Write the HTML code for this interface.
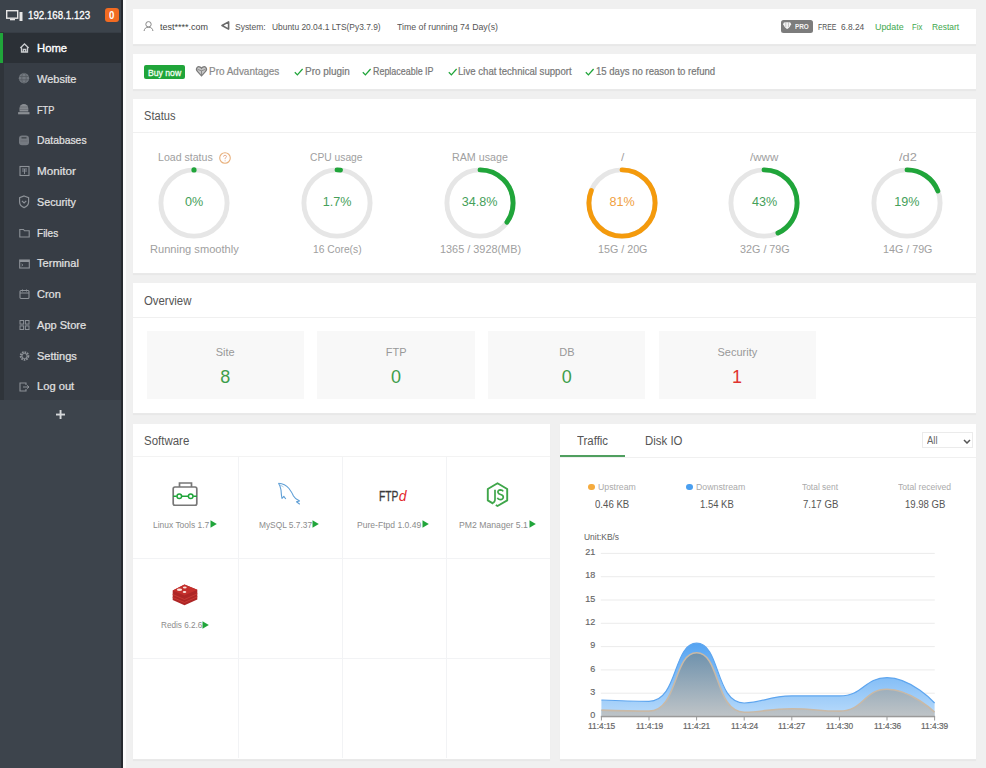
<!DOCTYPE html><html><head><meta charset="utf-8"><style>html,body{margin:0;padding:0}body{width:986px;height:768px;overflow:hidden;position:relative;background:#f0f0f0;font-family:"Liberation Sans",sans-serif}.t{position:absolute;white-space:nowrap;line-height:1;transform-origin:0 0}</style></head><body>
<div style="position:absolute;left:0;top:0;width:121px;height:32px;background:#3c434b"></div>
<div style="position:absolute;left:0;top:32px;width:121px;height:368px;background:#373d45"></div>
<div style="position:absolute;left:0;top:32px;width:4px;height:368px;background:#2f343a"></div>
<div style="position:absolute;left:0;top:400px;width:121px;height:368px;background:#3d444c"></div>
<div style="position:absolute;left:121px;top:0;width:1.5px;height:768px;background:#25292e"></div>
<div style="position:absolute;left:122.5px;top:0;width:3px;height:768px;background:#fbfbfb"></div>
<div style="position:absolute;left:0;top:32.5px;width:121px;height:30px;background:#2b3036"></div>
<div style="position:absolute;left:0;top:32.5px;width:2.5px;height:30px;background:#20a53a"></div>
<div style="position:absolute;left:104.5px;top:7.5px;width:14.5px;height:14.5px;border-radius:3px;background:#f26b22"></div>
<svg style="position:absolute;left:6px;top:10px" width="17" height="11" viewBox="0 0 17 11">
<rect x="0.7" y="0.7" width="11" height="7.5" fill="none" stroke="#e6e6e6" stroke-width="1.4"/>
<rect x="4" y="9" width="5" height="1.3" fill="#e6e6e6"/>
<rect x="13.5" y="2" width="3" height="9" fill="#e6e6e6"/></svg>
<svg style="position:absolute;left:19px;top:43.30px;overflow:visible" width="11" height="10" viewBox="0 0 11 10"><path d="M1.3,5 L5.5,1 L9.7,5 M2.5,4 V9 H8.5 V4 M4.3,9 V6.5 H6.7 V9" fill="none" stroke="#c9cbce" stroke-width="1.3"/></svg>
<svg style="position:absolute;left:19px;top:74.05px;overflow:visible" width="11" height="10" viewBox="0 0 11 10"><circle cx="5" cy="4.15" r="5.2" fill="#737980"/><path d="M0.2,2.5 H9.8 M0.2,5.8 H9.8" stroke="#555a61" stroke-width="0.8"/><ellipse cx="5" cy="4.15" rx="2.2" ry="5" fill="none" stroke="#555a61" stroke-width="0.8"/></svg>
<svg style="position:absolute;left:19px;top:104.80px;overflow:visible" width="11" height="10" viewBox="0 0 11 10"><path d="M0.5,6.5 V3.4 A4.4,4.4 0 0 1 9.3,3.4 V6.5 Z" fill="#8a8e93"/><path d="M1,2 H8.8 M0.8,4.3 H9" stroke="#5d6268" stroke-width="0.7"/><rect x="-0.9" y="7.1" width="11.4" height="2.2" fill="#8a8e93"/></svg>
<svg style="position:absolute;left:19px;top:135.55px;overflow:visible" width="11" height="10" viewBox="0 0 11 10"><rect x="0" y="-0.6" width="10" height="9.9" rx="3" fill="#757a81"/><rect x="2.5" y="1" width="5" height="1.6" fill="#474c52"/><path d="M1.5,5 H8.5" stroke="#62676d" stroke-width="0.6"/></svg>
<svg style="position:absolute;left:19px;top:166.30px;overflow:visible" width="11" height="10" viewBox="0 0 11 10"><rect x="1" y="0.5" width="9" height="9" fill="none" stroke="#8d9298" stroke-width="1.1"/><path d="M3,3 H8 M3,5 H8 M5.5,3 V8" stroke="#8d9298" stroke-width="0.9"/></svg>
<svg style="position:absolute;left:19px;top:197.05px;overflow:visible" width="11" height="10" viewBox="0 0 11 10"><path d="M5.1,-1 L9.6,0.6 V5 Q9.6,8.8 5.1,10.6 Q0.6,8.8 0.6,5 V0.6 Z" fill="none" stroke="#8d9298" stroke-width="1.2"/><path d="M2.9,3.8 L5.1,6 L7.3,3.8" fill="none" stroke="#8d9298" stroke-width="1.2"/></svg>
<svg style="position:absolute;left:19px;top:227.80px;overflow:visible" width="11" height="10" viewBox="0 0 11 10"><path d="M0.8,1.5 H4.5 L5.5,2.8 H10.2 V9 H0.8 Z" fill="none" stroke="#8d9298" stroke-width="1.1"/></svg>
<svg style="position:absolute;left:19px;top:258.55px;overflow:visible" width="11" height="10" viewBox="0 0 11 10"><rect x="0.7" y="1" width="9.6" height="8" fill="none" stroke="#8d9298" stroke-width="1.1"/><rect x="0.7" y="1" width="9.6" height="2" fill="#8d9298"/><path d="M2.5,5 L4,6 L2.5,7" fill="none" stroke="#8d9298" stroke-width="0.8"/></svg>
<svg style="position:absolute;left:19px;top:289.30px;overflow:visible" width="11" height="10" viewBox="0 0 11 10"><rect x="1" y="1.5" width="9" height="8" rx="1" fill="none" stroke="#8d9298" stroke-width="1.1"/><path d="M1,4 H10 M3.5,0.5 V2.5 M7.5,0.5 V2.5" stroke="#8d9298" stroke-width="1"/></svg>
<svg style="position:absolute;left:19px;top:320.05px;overflow:visible" width="11" height="10" viewBox="0 0 11 10"><rect x="1" y="0.5" width="3.6" height="3.6" fill="none" stroke="#8d9298" stroke-width="1"/><rect x="6.4" y="0.5" width="3.6" height="3.6" fill="none" stroke="#8d9298" stroke-width="1"/><rect x="1" y="5.9" width="3.6" height="3.6" fill="none" stroke="#8d9298" stroke-width="1"/><rect x="6.4" y="5.9" width="3.6" height="3.6" fill="none" stroke="#8d9298" stroke-width="1"/></svg>
<svg style="position:absolute;left:19px;top:350.80px;overflow:visible" width="11" height="10" viewBox="0 0 11 10"><circle cx="5.5" cy="5" r="3.8" fill="none" stroke="#8d9298" stroke-width="2" stroke-dasharray="1.6 0.9"/><circle cx="5.5" cy="5" r="2.6" fill="none" stroke="#8d9298" stroke-width="1"/></svg>
<svg style="position:absolute;left:19px;top:381.55px;overflow:visible" width="11" height="10" viewBox="0 0 11 10"><path d="M7,3 V1 H1 V9 H7 V7" fill="none" stroke="#8d9298" stroke-width="1.1"/><path d="M4,5 H10 M8,3.3 L10,5 L8,6.7" fill="none" stroke="#8d9298" stroke-width="1"/></svg>
<svg style="position:absolute;left:55.5px;top:410.2px" width="9" height="9" viewBox="0 0 9 9"><rect x="3.6" y="0" width="1.9" height="9" fill="#d5d8da"/><rect x="0" y="3.6" width="9" height="1.9" fill="#d5d8da"/></svg>
<div style="position:absolute;left:133px;top:9px;width:843px;height:35px;background:#fff;box-shadow:0 1px 0 #e9e9e9,0 2px 1px rgba(0,0,0,0.03)"></div>
<div style="position:absolute;left:133px;top:54px;width:843px;height:35px;background:#fff;box-shadow:0 1px 0 #e9e9e9,0 2px 1px rgba(0,0,0,0.03)"></div>
<div style="position:absolute;left:133px;top:98.5px;width:843px;height:174.5px;background:#fff;box-shadow:0 1px 0 #e9e9e9,0 2px 1px rgba(0,0,0,0.03)"></div>
<div style="position:absolute;left:133px;top:283px;width:843px;height:129.5px;background:#fff;box-shadow:0 1px 0 #e9e9e9,0 2px 1px rgba(0,0,0,0.03)"></div>
<div style="position:absolute;left:133px;top:423.5px;width:416.5px;height:335px;background:#fff;box-shadow:0 1px 0 #e9e9e9,0 2px 1px rgba(0,0,0,0.03)"></div>
<div style="position:absolute;left:560px;top:423.5px;width:416px;height:335px;background:#fff;box-shadow:0 1px 0 #e9e9e9,0 2px 1px rgba(0,0,0,0.03)"></div>
<svg style="position:absolute;left:143px;top:20.5px" width="11" height="10.5" viewBox="0 0 11 10.5">
<circle cx="5.5" cy="3.3" r="2.7" fill="none" stroke="#888" stroke-width="1"/>
<path d="M1,10.3 Q1.5,6.2 5.5,6.2 Q9.5,6.2 10,10.3" fill="none" stroke="#888" stroke-width="1"/></svg>
<svg style="position:absolute;left:221px;top:20.5px" width="9" height="9" viewBox="0 0 9 9">
<path d="M1,4.5 L7.6,0.9 L7.6,8.1 Z" fill="none" stroke="#6a6a6a" stroke-width="1.6" stroke-linejoin="round"/></svg>
<div style="position:absolute;left:780.5px;top:20px;width:32.5px;height:12.5px;border-radius:2.5px;background:#7c7c7c"></div>
<svg style="position:absolute;left:783.3px;top:22.1px" width="8.3" height="7.3" viewBox="0 0 8.3 7.3">
<path d="M0.2,2.2 Q0.2,0.4 2,0.2 H6.3 Q8.1,0.4 8.1,2.2 Q7.5,4.6 4.15,7.2 Q0.8,4.6 0.2,2.2 Z" fill="#f2f2f2"/><path d="M2.8,0.3 V5 M5.5,0.3 V5" stroke="#9a9a9a" stroke-width="0.5"/></svg>
<div style="position:absolute;left:143.7px;top:65px;width:41.3px;height:14.3px;border-radius:2px;background:#20a53a"></div>
<svg style="position:absolute;left:195.6px;top:66.2px;overflow:visible" width="11" height="10.4" viewBox="0 0 11 10.4">
<path d="M5.5,2.3 C4.6,0.7 2.4,0.2 1.2,1.4 C0,2.7 0.5,4.5 1.6,5.7 L5.5,9.8 L9.4,5.7 C10.5,4.5 11,2.7 9.8,1.4 C8.6,0.2 6.4,0.7 5.5,2.3 Z" fill="#c8c8c8" stroke="#7a7a7a" stroke-width="1.2"/>
<path d="M1.6,3.4 L5.5,4.8 L9.4,3.4 M5.5,4.8 V9" fill="none" stroke="#7a7a7a" stroke-width="0.8"/></svg>
<svg style="position:absolute;left:293.7px;top:67.5px" width="9.5" height="8" viewBox="0 0 9.5 8"><path d="M0.8,4.3 L3.4,6.9 L8.6,1" fill="none" stroke="#20a53a" stroke-width="1.3"/></svg>
<svg style="position:absolute;left:362px;top:67.5px" width="9.5" height="8" viewBox="0 0 9.5 8"><path d="M0.8,4.3 L3.4,6.9 L8.6,1" fill="none" stroke="#20a53a" stroke-width="1.3"/></svg>
<svg style="position:absolute;left:447.6px;top:67.5px" width="9.5" height="8" viewBox="0 0 9.5 8"><path d="M0.8,4.3 L3.4,6.9 L8.6,1" fill="none" stroke="#20a53a" stroke-width="1.3"/></svg>
<svg style="position:absolute;left:585.4px;top:67.5px" width="9.5" height="8" viewBox="0 0 9.5 8"><path d="M0.8,4.3 L3.4,6.9 L8.6,1" fill="none" stroke="#20a53a" stroke-width="1.3"/></svg>
<div style="position:absolute;left:133px;top:132px;width:843px;height:1px;background:#f0f0f0"></div>
<svg style="position:absolute;left:154.0px;top:162.5px" width="80" height="80" viewBox="0 0 80 80"><circle cx="40" cy="40" r="33.1" fill="none" stroke="#e6e6e6" stroke-width="4.9"/><circle cx="40" cy="6.899999999999999" r="2.6" fill="#20a53a"/></svg>
<svg style="position:absolute;left:297.0px;top:162.5px" width="80" height="80" viewBox="0 0 80 80"><circle cx="40" cy="40" r="33.1" fill="none" stroke="#e6e6e6" stroke-width="4.9"/><circle cx="40" cy="40" r="33.1" fill="none" stroke="#20a53a" stroke-width="4.9" stroke-linecap="round" stroke-dasharray="3.54 207.97" transform="rotate(-90 40 40)"/></svg>
<svg style="position:absolute;left:439.5px;top:162.5px" width="80" height="80" viewBox="0 0 80 80"><circle cx="40" cy="40" r="33.1" fill="none" stroke="#e6e6e6" stroke-width="4.9"/><circle cx="40" cy="40" r="33.1" fill="none" stroke="#20a53a" stroke-width="4.9" stroke-linecap="round" stroke-dasharray="72.37 207.97" transform="rotate(-90 40 40)"/></svg>
<svg style="position:absolute;left:582.0px;top:162.5px" width="80" height="80" viewBox="0 0 80 80"><circle cx="40" cy="40" r="33.1" fill="none" stroke="#e6e6e6" stroke-width="4.9"/><circle cx="40" cy="40" r="33.1" fill="none" stroke="#f49a0c" stroke-width="4.9" stroke-linecap="round" stroke-dasharray="168.46 207.97" transform="rotate(-90 40 40)"/></svg>
<svg style="position:absolute;left:724.4px;top:162.5px" width="80" height="80" viewBox="0 0 80 80"><circle cx="40" cy="40" r="33.1" fill="none" stroke="#e6e6e6" stroke-width="4.9"/><circle cx="40" cy="40" r="33.1" fill="none" stroke="#20a53a" stroke-width="4.9" stroke-linecap="round" stroke-dasharray="89.43 207.97" transform="rotate(-90 40 40)"/></svg>
<svg style="position:absolute;left:866.8px;top:162.5px" width="80" height="80" viewBox="0 0 80 80"><circle cx="40" cy="40" r="33.1" fill="none" stroke="#e6e6e6" stroke-width="4.9"/><circle cx="40" cy="40" r="33.1" fill="none" stroke="#20a53a" stroke-width="4.9" stroke-linecap="round" stroke-dasharray="39.51 207.97" transform="rotate(-90 40 40)"/></svg>
<svg style="position:absolute;left:218.9px;top:151.7px" width="12" height="12" viewBox="0 0 12 12">
<circle cx="6" cy="6" r="5.3" fill="none" stroke="#e8b07c" stroke-width="1.1"/>
<path d="M4.5,4.7 Q4.5,3.3 6,3.3 Q7.5,3.3 7.5,4.6 Q7.5,5.5 6.1,6.2 V7.2" fill="none" stroke="#e3a88a" stroke-width="0.9"/><circle cx="6.1" cy="8.7" r="0.55" fill="#e3a88a"/></svg>
<div style="position:absolute;left:133px;top:316.5px;width:843px;height:1px;background:#f0f0f0"></div>
<div style="position:absolute;left:146.5px;top:331.2px;width:157.4px;height:68.3px;background:#f8f8f8"></div>
<div style="position:absolute;left:317.3px;top:331.2px;width:157.4px;height:68.3px;background:#f8f8f8"></div>
<div style="position:absolute;left:488.1px;top:331.2px;width:157.4px;height:68.3px;background:#f8f8f8"></div>
<div style="position:absolute;left:658.9000000000001px;top:331.2px;width:157.4px;height:68.3px;background:#f8f8f8"></div>
<div style="position:absolute;left:133px;top:456.2px;width:416.5px;height:1px;background:#f3f3f3"></div>
<div style="position:absolute;left:237.5px;top:457px;width:1px;height:301px;background:#f2f3f5"></div>
<div style="position:absolute;left:341.6px;top:457px;width:1px;height:301px;background:#f2f3f5"></div>
<div style="position:absolute;left:445.8px;top:457px;width:1px;height:301px;background:#f2f3f5"></div>
<div style="position:absolute;left:133px;top:557.6px;width:416.5px;height:1px;background:#f2f3f5"></div>
<div style="position:absolute;left:133px;top:657.8px;width:416.5px;height:1px;background:#f2f3f5"></div>
<svg style="position:absolute;left:209.5px;top:520.2px" width="7" height="8" viewBox="0 0 7 8"><path d="M0.5,0.3 L6.8,4 L0.5,7.7 Z" fill="#20a53a"/></svg>
<svg style="position:absolute;left:312.1px;top:520.2px" width="7" height="8" viewBox="0 0 7 8"><path d="M0.5,0.3 L6.8,4 L0.5,7.7 Z" fill="#20a53a"/></svg>
<svg style="position:absolute;left:421.8px;top:520.2px" width="7" height="8" viewBox="0 0 7 8"><path d="M0.5,0.3 L6.8,4 L0.5,7.7 Z" fill="#20a53a"/></svg>
<svg style="position:absolute;left:528.5px;top:520.2px" width="7" height="8" viewBox="0 0 7 8"><path d="M0.5,0.3 L6.8,4 L0.5,7.7 Z" fill="#20a53a"/></svg>
<svg style="position:absolute;left:202.1px;top:620.5px" width="7" height="8" viewBox="0 0 7 8"><path d="M0.5,0.3 L6.8,4 L0.5,7.7 Z" fill="#20a53a"/></svg>
<svg style="position:absolute;left:172px;top:482px" width="26" height="24" viewBox="0 0 26 24">
<path d="M7.5,5 V1 H19.5 V5" fill="none" stroke="#777" stroke-width="1.7"/>
<rect x="1.2" y="5" width="23.6" height="18.4" rx="1.8" fill="none" stroke="#777" stroke-width="1.7"/>
<path d="M1,14.3 H4.8 M9.7,14.3 H16.3 M21.2,14.3 H25" stroke="#20a53a" stroke-width="1.5"/>
<circle cx="7.3" cy="14.3" r="2.3" fill="none" stroke="#20a53a" stroke-width="1.5"/>
<circle cx="18.7" cy="14.3" r="2.3" fill="none" stroke="#20a53a" stroke-width="1.5"/></svg>
<svg style="position:absolute;left:274px;top:479px" width="30" height="30" viewBox="0 0 30 30">
<path d="M4.5,4.2 Q11,4.5 15,9.5 Q18,13.5 19.5,17 Q21,19.5 24,21 L25.5,22 L22.5,22.8 L25.8,25.2" fill="none" stroke="#5f9fd6" stroke-width="1.1" stroke-linejoin="round"/>
<path d="M4.5,4.2 Q6.5,7 7,11 Q7.3,16 8,19.5 L9.8,17.3 L11.8,20" fill="none" stroke="#5f9fd6" stroke-width="1.1" stroke-linejoin="round"/>
<path d="M6,6 Q9,7.5 9.5,8" fill="none" stroke="#8cbde6" stroke-width="0.8"/></svg>
<svg style="position:absolute;left:486px;top:481.5px" width="23" height="25" viewBox="0 0 23 25">
<path d="M7.2,21.6 L1.8,18.4 V7 L11.5,1.3 L21.2,7 V18.4 L11.5,24 L9.8,23" fill="none" stroke="#3fa64a" stroke-width="1.9" stroke-linejoin="round"/>
<path d="M9,7.8 V17.5 Q9,20.3 6.5,20.8" fill="none" stroke="#3fa64a" stroke-width="1.7"/>
<path d="M17.2,9.4 Q16.4,7.9 14.3,7.9 Q11.8,8 11.9,10.2 Q12.1,12 14.6,12.5 Q17.4,13.1 17.3,15.3 Q17.1,17.6 14.3,17.6 Q12,17.5 11.4,15.8" fill="none" stroke="#3fa64a" stroke-width="1.7"/></svg>
<svg style="position:absolute;left:172px;top:583.5px" width="26" height="22" viewBox="0 0 26 22">
<path d="M0.7,6.5 L12.5,0.5 L25.3,5.8 V15.5 L12.5,21.3 L0.7,16 Z" fill="#ae2626"/>
<path d="M0.7,6.5 L12.5,0.5 L25.3,5.8 L12.5,11.5 Z" fill="#c42f2c"/>
<path d="M0.7,10.5 L12.5,15.5 L25.3,9.8 M0.7,13.5 L12.5,18.5 L25.3,12.8" fill="none" stroke="#c83a34" stroke-width="1"/>
<ellipse cx="7.5" cy="5.8" rx="2.6" ry="1.2" fill="#fbe3dc"/><ellipse cx="12.8" cy="3.6" rx="1.9" ry="1" fill="#fbe3dc"/><ellipse cx="12.5" cy="8" rx="1.8" ry="1" fill="#fbe3dc"/></svg>
<div style="position:absolute;left:560px;top:456.5px;width:416px;height:1px;background:#f0f0f0"></div>
<div style="position:absolute;left:560px;top:455px;width:65px;height:2px;background:#4f9f5f"></div>
<div style="position:absolute;left:922.2px;top:432.1px;width:51px;height:16.2px;border:1px solid #ebebeb;box-sizing:border-box"></div>
<svg style="position:absolute;left:962.5px;top:438.5px" width="8" height="5" viewBox="0 0 8 5"><path d="M1,1 L4,4 L7,1" fill="none" stroke="#555" stroke-width="1.5"/></svg>
<div style="position:absolute;left:588.4px;top:483.6px;width:6.6px;height:6.6px;border-radius:50%;background:#f5ab3e"></div>
<div style="position:absolute;left:686.4px;top:483.6px;width:6.6px;height:6.6px;border-radius:50%;background:#4a9ff0"></div>
<svg style="position:absolute;left:0;top:0" width="986" height="768" viewBox="0 0 986 768">
<defs><linearGradient id="gd" x1="0" y1="0" x2="0" y2="1"><stop offset="0" stop-color="#55a4f2"/><stop offset="1" stop-color="#b9dbfb"/></linearGradient>
<linearGradient id="gu" x1="0" y1="0" x2="0" y2="1"><stop offset="0" stop-color="#6f92ad"/><stop offset="1" stop-color="#bfc4c7"/></linearGradient></defs>
<rect x="600.8" y="552.9" width="334" height="1" fill="#ececec"/><rect x="600.8" y="576.2" width="334" height="1" fill="#ececec"/><rect x="600.8" y="599.5" width="334" height="1" fill="#ececec"/><rect x="600.8" y="622.8" width="334" height="1" fill="#ececec"/><rect x="600.8" y="646.1" width="334" height="1" fill="#ececec"/><rect x="600.8" y="669.4" width="334" height="1" fill="#ececec"/><rect x="600.8" y="692.7" width="334" height="1" fill="#ececec"/>
<path d="M601.4,700.0 C601.4,700.0 630.5,701.4 649.0,701.4 C678.1,701.4 673.0,643.2 696.6,643.2 C720.6,643.2 715.0,703.0 744.2,703.0 C762.6,703.0 767.9,695.9 791.8,695.9 C815.5,695.9 816.4,695.9 839.4,695.9 C864.0,695.9 863.9,677.7 887.0,677.7 C911.5,677.7 934.6,703.0 934.6,703.0 L934.6,716.5 L601.4,716.5 Z" fill="url(#gd)"/>
<path d="M601.4,700.0 C601.4,700.0 630.5,701.4 649.0,701.4 C678.1,701.4 673.0,643.2 696.6,643.2 C720.6,643.2 715.0,703.0 744.2,703.0 C762.6,703.0 767.9,695.9 791.8,695.9 C815.5,695.9 816.4,695.9 839.4,695.9 C864.0,695.9 863.9,677.7 887.0,677.7 C911.5,677.7 934.6,703.0 934.6,703.0" fill="none" stroke="#5da5ef" stroke-width="1.2"/>
<path d="M601.4,710.1 C601.4,710.1 630.6,711.1 649.0,711.1 C678.2,711.1 672.9,652.8 696.6,652.8 C720.5,652.8 714.9,712.2 744.2,712.2 C762.5,712.2 768.0,708.7 791.8,708.7 C815.6,708.7 816.7,711.1 839.4,711.1 C864.3,711.1 863.3,689.3 887.0,689.3 C910.9,689.3 934.6,712.2 934.6,712.2 L934.6,716.5 L601.4,716.5 Z" fill="url(#gu)"/>
<path d="M601.4,710.1 C601.4,710.1 630.6,711.1 649.0,711.1 C678.2,711.1 672.9,652.8 696.6,652.8 C720.5,652.8 714.9,712.2 744.2,712.2 C762.5,712.2 768.0,708.7 791.8,708.7 C815.6,708.7 816.7,711.1 839.4,711.1 C864.3,711.1 863.3,689.3 887.0,689.3 C910.9,689.3 934.6,712.2 934.6,712.2" fill="none" stroke="#c9b9a6" stroke-width="1.6"/>
<rect x="600.8" y="715.8" width="334.3" height="1.5" fill="#9a9a9a"/>
<rect x="600.9" y="716.5" width="1" height="4" fill="#9a9a9a"/><rect x="648.5" y="716.5" width="1" height="4" fill="#9a9a9a"/><rect x="696.1" y="716.5" width="1" height="4" fill="#9a9a9a"/><rect x="743.7" y="716.5" width="1" height="4" fill="#9a9a9a"/><rect x="791.3" y="716.5" width="1" height="4" fill="#9a9a9a"/><rect x="838.9" y="716.5" width="1" height="4" fill="#9a9a9a"/><rect x="886.5" y="716.5" width="1" height="4" fill="#9a9a9a"/><rect x="934.1" y="716.5" width="1" height="4" fill="#9a9a9a"/>
</svg>
<span class="t" style="left:28.00px;top:10.30px;font-size:11px;font-weight:400;color:#ffffff;-webkit-text-stroke:0.3px currentColor;transform:scaleX(0.8828);">192.168.1.123</span>
<span class="t" style="left:108.60px;top:11.00px;font-size:10px;font-weight:700;color:#ffffff;transform:scaleX(0.9667);">0</span>
<span class="t" style="left:37.10px;top:43.00px;font-size:11.5px;font-weight:400;color:#ffffff;-webkit-text-stroke:0.35px currentColor;transform:scaleX(0.9808);">Home</span>
<span class="t" style="left:37.10px;top:73.75px;font-size:11.5px;font-weight:400;color:#e2e2e2;-webkit-text-stroke:0.22px currentColor;transform:scaleX(0.9551);">Website</span>
<span class="t" style="left:37.10px;top:104.50px;font-size:11.5px;font-weight:400;color:#e2e2e2;-webkit-text-stroke:0.22px currentColor;transform:scaleX(0.7982);">FTP</span>
<span class="t" style="left:37.10px;top:135.25px;font-size:11.5px;font-weight:400;color:#e2e2e2;-webkit-text-stroke:0.22px currentColor;transform:scaleX(0.9017);">Databases</span>
<span class="t" style="left:37.10px;top:166.00px;font-size:11.5px;font-weight:400;color:#e2e2e2;-webkit-text-stroke:0.22px currentColor;transform:scaleX(1.0125);">Monitor</span>
<span class="t" style="left:37.10px;top:196.75px;font-size:11.5px;font-weight:400;color:#e2e2e2;-webkit-text-stroke:0.22px currentColor;transform:scaleX(0.9332);">Security</span>
<span class="t" style="left:37.10px;top:227.50px;font-size:11.5px;font-weight:400;color:#e2e2e2;-webkit-text-stroke:0.22px currentColor;transform:scaleX(0.8724);">Files</span>
<span class="t" style="left:37.10px;top:258.25px;font-size:11.5px;font-weight:400;color:#e2e2e2;-webkit-text-stroke:0.22px currentColor;transform:scaleX(0.9627);">Terminal</span>
<span class="t" style="left:37.10px;top:289.00px;font-size:11.5px;font-weight:400;color:#e2e2e2;-webkit-text-stroke:0.22px currentColor;transform:scaleX(0.9580);">Cron</span>
<span class="t" style="left:37.10px;top:319.75px;font-size:11.5px;font-weight:400;color:#e2e2e2;-webkit-text-stroke:0.22px currentColor;transform:scaleX(0.9616);">App Store</span>
<span class="t" style="left:37.10px;top:350.50px;font-size:11.5px;font-weight:400;color:#e2e2e2;-webkit-text-stroke:0.22px currentColor;transform:scaleX(0.9569);">Settings</span>
<span class="t" style="left:37.10px;top:381.25px;font-size:11.5px;font-weight:400;color:#e2e2e2;-webkit-text-stroke:0.22px currentColor;transform:scaleX(0.9700);">Log out</span>
<span class="t" style="left:159.80px;top:22.20px;font-size:9.5px;font-weight:400;color:#444;transform:scaleX(0.9454);">test****.com</span>
<span class="t" style="left:235.30px;top:22.00px;font-size:9.5px;font-weight:400;color:#555;transform:scaleX(0.8909);">System:</span>
<span class="t" style="left:271.90px;top:22.00px;font-size:9.5px;font-weight:400;color:#555;transform:scaleX(0.8842);">Ubuntu 20.04.1 LTS(Py3.7.9)</span>
<span class="t" style="left:397.40px;top:22.00px;font-size:9.5px;font-weight:400;color:#555;transform:scaleX(0.9222);">Time of running 74 Day(s)</span>
<span class="t" style="left:794.70px;top:23.10px;font-size:7.2px;font-weight:700;color:#f5f5f5;transform:scaleX(0.8884);">PRO</span>
<span class="t" style="left:817.70px;top:21.80px;font-size:9.5px;font-weight:400;color:#555;transform:scaleX(0.7280);">FREE</span>
<span class="t" style="left:841.40px;top:21.80px;font-size:9.5px;font-weight:400;color:#555;transform:scaleX(0.8802);">6.8.24</span>
<span class="t" style="left:874.50px;top:21.80px;font-size:9.5px;font-weight:400;color:#3ea84e;transform:scaleX(0.9357);">Update</span>
<span class="t" style="left:912.00px;top:21.80px;font-size:9.5px;font-weight:400;color:#3ea84e;transform:scaleX(0.8131);">Fix</span>
<span class="t" style="left:932.30px;top:21.80px;font-size:9.5px;font-weight:400;color:#3ea84e;transform:scaleX(0.8844);">Restart</span>
<span class="t" style="left:147.60px;top:68.70px;font-size:9.2px;font-weight:400;color:#f4fff4;-webkit-text-stroke:0.28px currentColor;transform:scaleX(0.9409);">Buy now</span>
<span class="t" style="left:209.00px;top:66.00px;font-size:10.5px;font-weight:400;color:#8a8a8a;-webkit-text-stroke:0.2px currentColor;transform:scaleX(0.9481);">Pro Advantages</span>
<span class="t" style="left:304.60px;top:66.80px;font-size:10px;font-weight:400;color:#777;-webkit-text-stroke:0.2px currentColor;transform:scaleX(0.9940);">Pro plugin</span>
<span class="t" style="left:372.80px;top:66.80px;font-size:10px;font-weight:400;color:#777;-webkit-text-stroke:0.2px currentColor;transform:scaleX(0.8921);">Replaceable IP</span>
<span class="t" style="left:457.60px;top:66.80px;font-size:10px;font-weight:400;color:#777;-webkit-text-stroke:0.2px currentColor;transform:scaleX(0.9593);">Live chat technical support</span>
<span class="t" style="left:595.80px;top:66.80px;font-size:10px;font-weight:400;color:#777;-webkit-text-stroke:0.2px currentColor;transform:scaleX(0.9567);">15 days no reason to refund</span>
<span class="t" style="left:143.80px;top:110.40px;font-size:12.5px;font-weight:400;color:#555;transform:scaleX(0.8867);">Status</span>
<span class="t" style="left:158.00px;top:152.00px;font-size:11px;font-weight:400;color:#a0a0a0;transform:scaleX(0.9621);">Load status</span>
<span class="t" style="left:185.00px;top:196.10px;font-size:12.6px;font-weight:400;color:#45a05a;">0%</span>
<span class="t" style="left:149.70px;top:244.10px;font-size:11px;font-weight:400;color:#a0a0a0;transform:scaleX(1.0074);">Running smoothly</span>
<span class="t" style="left:310.30px;top:152.00px;font-size:11px;font-weight:400;color:#a0a0a0;transform:scaleX(0.9335);">CPU usage</span>
<span class="t" style="left:322.75px;top:196.10px;font-size:12.6px;font-weight:400;color:#45a05a;">1.7%</span>
<span class="t" style="left:313.00px;top:244.10px;font-size:11px;font-weight:400;color:#a0a0a0;transform:scaleX(0.9357);">16 Core(s)</span>
<span class="t" style="left:451.50px;top:152.00px;font-size:11px;font-weight:400;color:#a0a0a0;transform:scaleX(0.9729);">RAM usage</span>
<span class="t" style="left:461.74px;top:196.10px;font-size:12.6px;font-weight:400;color:#45a05a;">34.8%</span>
<span class="t" style="left:439.60px;top:244.10px;font-size:11px;font-weight:400;color:#a0a0a0;transform:scaleX(0.9893);">1365 / 3928(MB)</span>
<span class="t" style="left:620.70px;top:152.00px;font-size:11px;font-weight:400;color:#a0a0a0;transform:scaleX(1.0750);">/</span>
<span class="t" style="left:609.50px;top:196.10px;font-size:12.6px;font-weight:400;color:#f0a040;">81%</span>
<span class="t" style="left:597.90px;top:244.10px;font-size:11px;font-weight:400;color:#a0a0a0;transform:scaleX(0.9742);">15G / 20G</span>
<span class="t" style="left:750.40px;top:152.00px;font-size:11px;font-weight:400;color:#a0a0a0;transform:scaleX(1.0540);">/www</span>
<span class="t" style="left:751.90px;top:196.10px;font-size:12.6px;font-weight:400;color:#45a05a;">43%</span>
<span class="t" style="left:739.80px;top:244.10px;font-size:11px;font-weight:400;color:#a0a0a0;transform:scaleX(0.9802);">32G / 79G</span>
<span class="t" style="left:898.80px;top:152.00px;font-size:11px;font-weight:400;color:#a0a0a0;transform:scaleX(1.1665);">/d2</span>
<span class="t" style="left:894.30px;top:196.10px;font-size:12.6px;font-weight:400;color:#45a05a;">19%</span>
<span class="t" style="left:882.80px;top:244.10px;font-size:11px;font-weight:400;color:#a0a0a0;transform:scaleX(0.9742);">14G / 79G</span>
<span class="t" style="left:143.70px;top:294.60px;font-size:12.5px;font-weight:400;color:#555;transform:scaleX(0.9102);">Overview</span>
<span class="t" style="left:215.78px;top:346.50px;font-size:11px;font-weight:400;color:#999;">Site</span>
<span class="t" style="left:220.20px;top:367.90px;font-size:18px;font-weight:400;color:#3e9e4a;">8</span>
<span class="t" style="left:385.78px;top:346.50px;font-size:11px;font-weight:400;color:#999;">FTP</span>
<span class="t" style="left:391.00px;top:367.90px;font-size:18px;font-weight:400;color:#3e9e4a;">0</span>
<span class="t" style="left:559.33px;top:346.50px;font-size:11px;font-weight:400;color:#999;">DB</span>
<span class="t" style="left:561.80px;top:367.90px;font-size:18px;font-weight:400;color:#3e9e4a;">0</span>
<span class="t" style="left:717.48px;top:346.50px;font-size:11px;font-weight:400;color:#999;">Security</span>
<span class="t" style="left:732.10px;top:367.90px;font-size:18px;font-weight:400;color:#e0332f;">1</span>
<span class="t" style="left:144.00px;top:434.70px;font-size:12.5px;font-weight:400;color:#555;transform:scaleX(0.9174);">Software</span>
<span class="t" style="left:152.90px;top:519.70px;font-size:9.5px;font-weight:400;color:#8c8c8c;transform:scaleX(0.8892);">Linux Tools 1.7</span>
<span class="t" style="left:258.50px;top:519.70px;font-size:9.5px;font-weight:400;color:#8c8c8c;transform:scaleX(0.8785);">MySQL 5.7.37</span>
<span class="t" style="left:357.40px;top:519.70px;font-size:9.5px;font-weight:400;color:#8c8c8c;transform:scaleX(0.8999);">Pure-Ftpd 1.0.49</span>
<span class="t" style="left:459.40px;top:519.70px;font-size:9.5px;font-weight:400;color:#8c8c8c;transform:scaleX(0.9119);">PM2 Manager 5.1</span>
<span class="t" style="left:160.50px;top:620.00px;font-size:9.5px;font-weight:400;color:#8c8c8c;transform:scaleX(0.8603);">Redis 6.2.6</span>
<span class="t" style="left:379.45px;top:489.50px;font-size:13.8px;font-weight:400;color:#3a3a3a;-webkit-text-stroke:0.3px currentColor;transform:scaleX(0.7483);">FTP</span>
<span class="t" style="left:398.80px;top:488.80px;font-size:14px;font-weight:400;color:#e3262b;font-style:italic;font-family:"Liberation Serif",serif;transform:scaleX(0.9444);">d</span>
<span class="t" style="left:577.20px;top:434.50px;font-size:12.5px;font-weight:400;color:#555;transform:scaleX(0.9117);">Traffic</span>
<span class="t" style="left:645.09px;top:434.50px;font-size:12.5px;font-weight:400;color:#555;transform:scaleX(0.9143);">Disk IO</span>
<span class="t" style="left:926.60px;top:435.90px;font-size:10px;font-weight:400;color:#666;transform:scaleX(0.9457);">All</span>
<span class="t" style="left:597.50px;top:482.90px;font-size:8.5px;font-weight:400;color:#aaa;transform:scaleX(1.0255);">Upstream</span>
<span class="t" style="left:696.20px;top:482.90px;font-size:8.5px;font-weight:400;color:#aaa;transform:scaleX(1.0309);">Downstream</span>
<span class="t" style="left:802.40px;top:482.90px;font-size:8.5px;font-weight:400;color:#aaa;transform:scaleX(0.9886);">Total sent</span>
<span class="t" style="left:898.10px;top:482.90px;font-size:8.5px;font-weight:400;color:#aaa;transform:scaleX(1.0111);">Total received</span>
<span class="t" style="left:594.60px;top:499.20px;font-size:11px;font-weight:400;color:#555;transform:scaleX(0.8762);">0.46 KB</span>
<span class="t" style="left:699.60px;top:499.20px;font-size:11px;font-weight:400;color:#555;transform:scaleX(0.8608);">1.54 KB</span>
<span class="t" style="left:802.90px;top:499.20px;font-size:11px;font-weight:400;color:#555;transform:scaleX(0.8745);">7.17 GB</span>
<span class="t" style="left:904.70px;top:499.20px;font-size:11px;font-weight:400;color:#555;transform:scaleX(0.8691);">19.98 GB</span>
<span class="t" style="left:583.80px;top:532.20px;font-size:9.5px;font-weight:400;color:#606060;transform:scaleX(0.8859);">Unit:KB/s</span>
<span class="t" style="left:585.19px;top:548.10px;font-size:9px;font-weight:400;color:#666;-webkit-text-stroke:0.15px currentColor;">21</span>
<span class="t" style="left:585.19px;top:571.40px;font-size:9px;font-weight:400;color:#666;-webkit-text-stroke:0.15px currentColor;">18</span>
<span class="t" style="left:585.19px;top:594.70px;font-size:9px;font-weight:400;color:#666;-webkit-text-stroke:0.15px currentColor;">15</span>
<span class="t" style="left:585.19px;top:618.00px;font-size:9px;font-weight:400;color:#666;-webkit-text-stroke:0.15px currentColor;">12</span>
<span class="t" style="left:590.20px;top:641.30px;font-size:9px;font-weight:400;color:#666;-webkit-text-stroke:0.15px currentColor;">9</span>
<span class="t" style="left:590.20px;top:664.60px;font-size:9px;font-weight:400;color:#666;-webkit-text-stroke:0.15px currentColor;">6</span>
<span class="t" style="left:590.20px;top:687.90px;font-size:9px;font-weight:400;color:#666;-webkit-text-stroke:0.15px currentColor;">3</span>
<span class="t" style="left:590.20px;top:711.20px;font-size:9px;font-weight:400;color:#666;-webkit-text-stroke:0.15px currentColor;">0</span>
<span class="t" style="left:587.90px;top:721.00px;font-size:9.5px;font-weight:400;color:#666;-webkit-text-stroke:0.2px currentColor;transform:scaleX(0.8793);">11:4:15</span>
<span class="t" style="left:635.50px;top:721.00px;font-size:9.5px;font-weight:400;color:#666;-webkit-text-stroke:0.2px currentColor;transform:scaleX(0.8793);">11:4:19</span>
<span class="t" style="left:683.10px;top:721.00px;font-size:9.5px;font-weight:400;color:#666;-webkit-text-stroke:0.2px currentColor;transform:scaleX(0.8793);">11:4:21</span>
<span class="t" style="left:730.70px;top:721.00px;font-size:9.5px;font-weight:400;color:#666;-webkit-text-stroke:0.2px currentColor;transform:scaleX(0.8793);">11:4:24</span>
<span class="t" style="left:778.30px;top:721.00px;font-size:9.5px;font-weight:400;color:#666;-webkit-text-stroke:0.2px currentColor;transform:scaleX(0.8793);">11:4:27</span>
<span class="t" style="left:825.90px;top:721.00px;font-size:9.5px;font-weight:400;color:#666;-webkit-text-stroke:0.2px currentColor;transform:scaleX(0.8793);">11:4:30</span>
<span class="t" style="left:873.50px;top:721.00px;font-size:9.5px;font-weight:400;color:#666;-webkit-text-stroke:0.2px currentColor;transform:scaleX(0.8793);">11:4:36</span>
<span class="t" style="left:921.10px;top:721.00px;font-size:9.5px;font-weight:400;color:#666;-webkit-text-stroke:0.2px currentColor;transform:scaleX(0.8793);">11:4:39</span>
</body></html>
